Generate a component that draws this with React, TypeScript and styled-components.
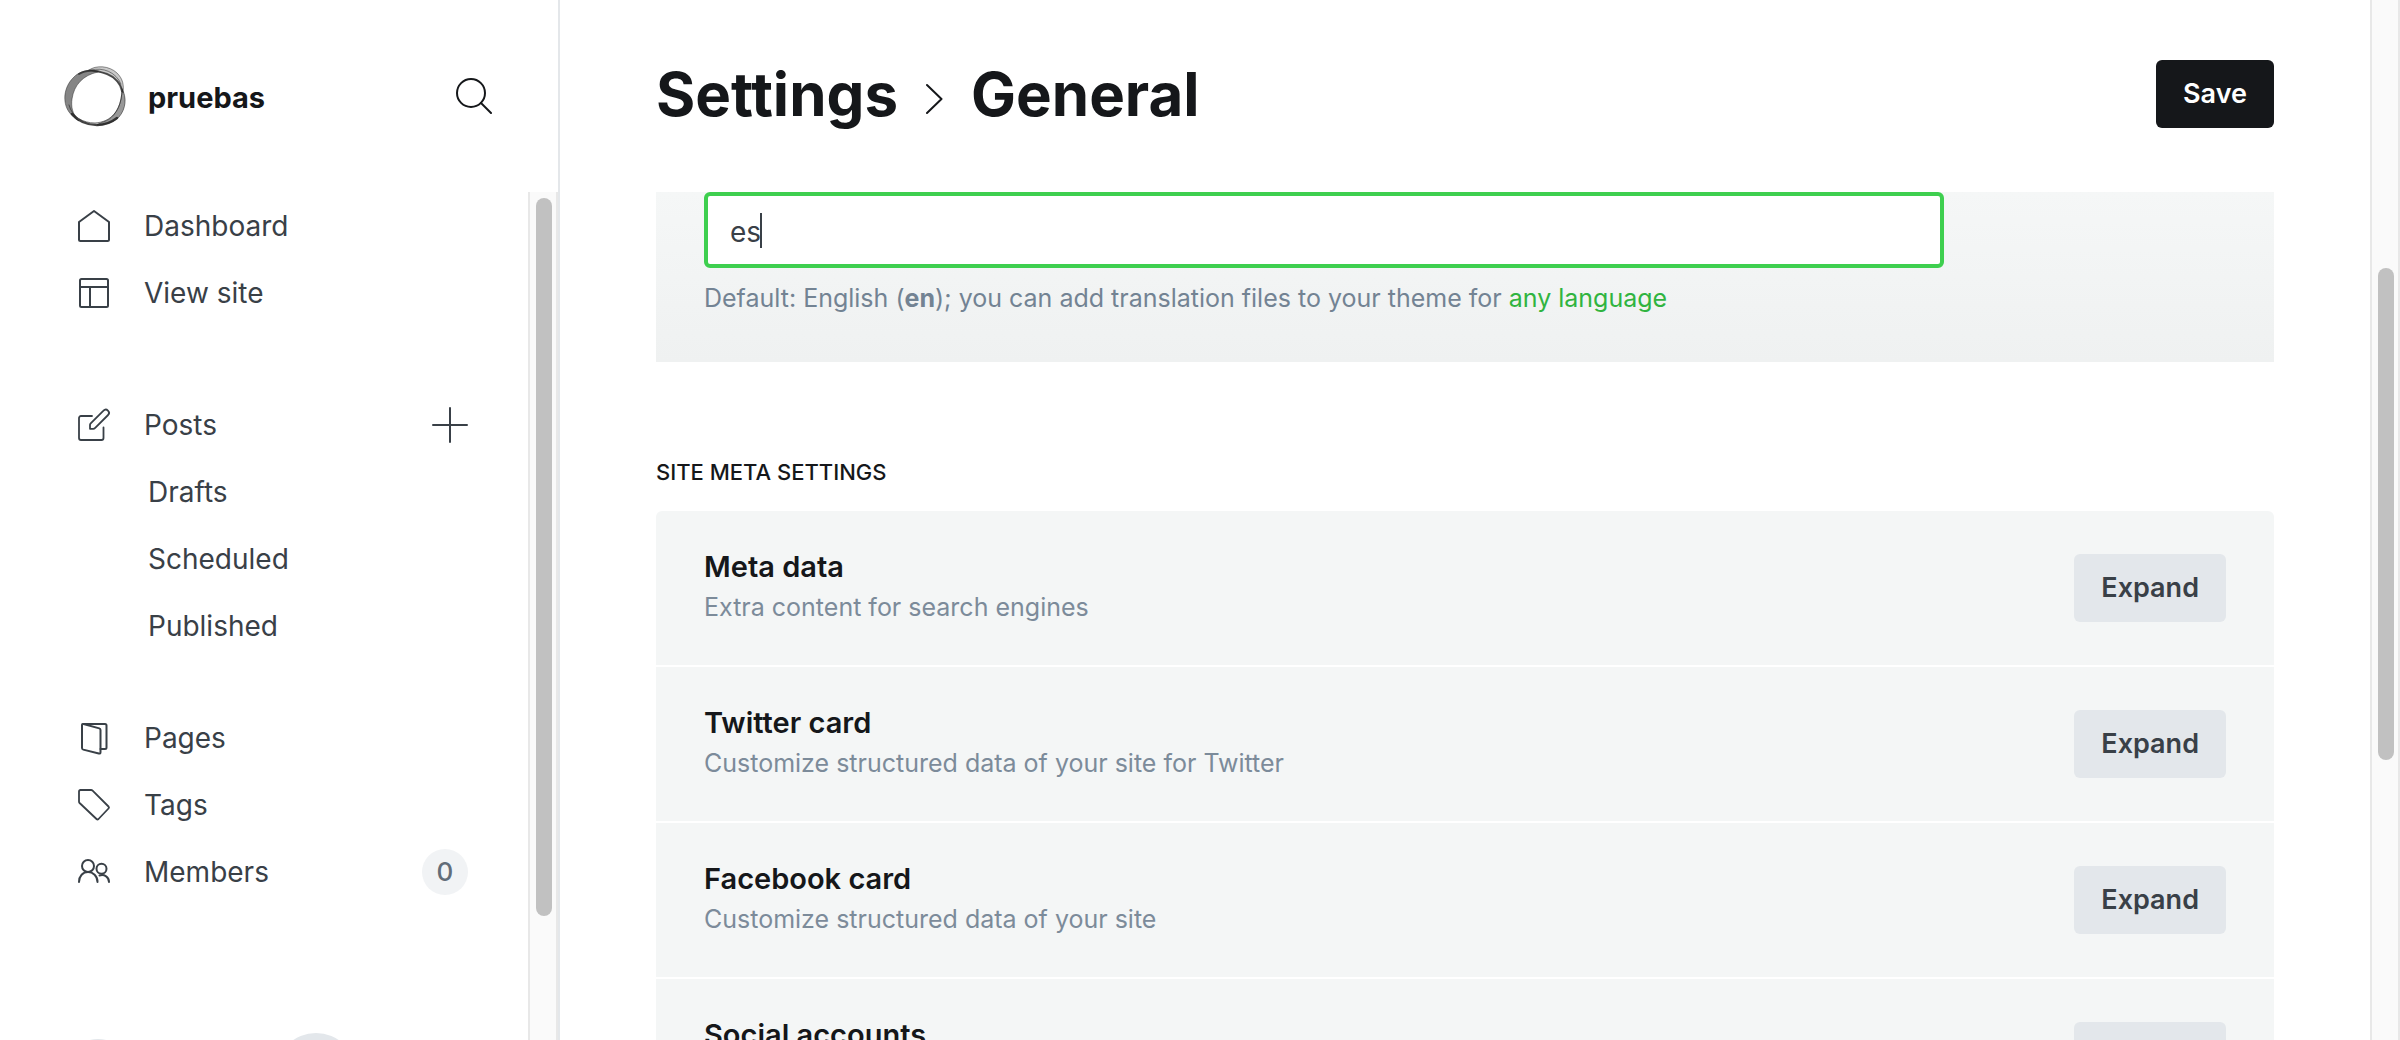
import React from "react";
import styled, { createGlobalStyle } from "styled-components";

const ink = "#15171a";
const slate = "#394047";

const GlobalStyle = createGlobalStyle`
  *, *::before, *::after { box-sizing: border-box; }
  body {
    margin: 0;
    background: #fff;
    color: ${slate};
    font-family: Inter, "Open Sans", sans-serif;
    font-size: 28px;
    line-height: 34px;
  }
  a { color: inherit; text-decoration: none; }
  button, input { font: inherit; }
`;

const Shell = styled.div`
  display: flex;
  height: 100vh;
  overflow: hidden;
`;

const Sidebar = styled.aside`
  flex: 0 0 560px;
  display: flex;
  flex-direction: column;
  border-right: 2px solid #e4e7ea;
`;

const SiteBar = styled.div`
  flex: 0 0 192px;
  display: flex;
  align-items: center;
  gap: 22px;
  padding: 0 66px 0 64px;
`;

const SiteName = styled.strong`
  flex: 1;
  padding-top: 4px;
  color: ${ink};
  font-size: 29px;
  font-weight: 700;
`;

const IconButton = styled.button`
  display: flex;
  padding: 0;
  border: 0;
  background: none;
  color: ${(p) => p.color};
  cursor: pointer;
`;

const SidebarBody = styled.div`
  flex: 1;
  min-height: 0;
  display: flex;
`;

const Nav = styled.nav`
  flex: 1;
  display: flex;
  flex-direction: column;
  overflow: hidden;
`;

const NavList = styled.ul<{ $after: number }>`
  margin: 0 0 ${(p) => p.$after}px;
  padding: 0;
  list-style: none;
`;

const NavItem = styled.li`
  display: flex;
  align-items: center;
  height: 67px;
  padding: 0 60px 0 76px;
`;

const NavLink = styled.a`
  flex: 1;
  display: flex;
  align-items: center;
  gap: 32px;
`;

const SubLink = styled.a`
  flex: 1;
  padding-left: 72px;
`;

const Count = styled.span`
  display: grid;
  place-items: center;
  width: 46px;
  height: 46px;
  border-radius: 50%;
  background: #f1f3f5;
  color: #626d79;
  font-size: 26px;
  font-weight: 500;
`;

const SidebarFooter = styled.div`
  display: flex;
  align-items: center;
  gap: 144px;
  padding: 64px;
`;

const Disc = styled.button<{ $size: number }>`
  width: ${(p) => p.$size}px;
  height: ${(p) => p.$size}px;
  border: 0;
  border-radius: 50%;
  background: #e3e7eb;
`;

const Track = styled.div`
  flex: 0 0 30px;
  padding: 0 4px 0 6px;
  border: solid #e8e8e8;
  border-width: 0 2px;
  background: #fafafa;
`;

const Thumb = styled.div<{ $top: number; $length: number }>`
  width: 16px;
  height: ${(p) => p.$length}px;
  margin-top: ${(p) => p.$top}px;
  border-radius: 8px;
  background: #c1c1c1;
`;

const TrackInner = styled.div`
  display: flow-root;
`;

const Main = styled.main`
  flex: 1;
  min-width: 0;
  padding: 0 96px;
`;

const Header = styled.header`
  display: flex;
  align-items: center;
  justify-content: space-between;
  height: 192px;
  padding-bottom: 4px;
`;

const Title = styled.h1`
  display: flex;
  align-items: center;
  gap: 28px;
  margin: 0;
  color: ${ink};
  font-size: 60px;
  line-height: 72px;
  font-weight: 700;
`;

const Button = styled.button<{ $primary?: boolean }>`
  height: 68px;
  padding: 0 27px;
  border: 0;
  border-radius: 6px;
  background: ${(p) => (p.$primary ? ink : "#e3e7eb")};
  color: ${(p) => (p.$primary ? "#fff" : slate)};
  font-size: 27px;
  font-weight: 600;
  cursor: pointer;
`;

const LanguagePanel = styled.section`
  height: 170px;
  padding: 0 48px;
  background: linear-gradient(#f5f7f7, #eff1f1);
`;

const Field = styled.div`
  position: relative;
  max-width: 1240px;
`;

const TextInput = styled.input`
  display: block;
  width: 100%;
  height: 76px;
  padding: 4px 22px 0;
  border: 4px solid #3ecf4f;
  border-radius: 6px;
  outline: 0;
  background: #fff;
  color: ${slate};
  caret-color: transparent;
`;

const Caret = styled.span`
  position: absolute;
  top: 21px;
  left: 56px;
  width: 2px;
  height: 35px;
  background: ${slate};
`;

const Help = styled.p`
  margin: 14px 0 0;
  color: #738393;
  font-size: 25px;
  line-height: 32px;

  a { color: #30b440; }
  b { font-weight: 700; }
`;

const SectionTitle = styled.h2`
  margin: 93px 0 22px;
  color: ${ink};
  font-size: 22px;
  line-height: 34px;
  font-weight: 500;
  text-transform: uppercase;
`;

const Settings = styled.ul`
  display: flex;
  flex-direction: column;
  gap: 2px;
  margin: 0;
  padding: 0;
  border-radius: 6px;
  overflow: hidden;
  list-style: none;
`;

const SettingRow = styled.li`
  display: flex;
  align-items: center;
  justify-content: space-between;
  height: 154px;
  padding: 0 48px;
  background: #f4f6f6;
`;

const SettingName = styled.h3`
  margin: 0;
  color: ${ink};
  font-size: 29px;
  line-height: 40px;
  font-weight: 600;
`;

const SettingNote = styled.p`
  margin: 0 0 2px;
  color: #7c8b9a;
  font-size: 25px;
  line-height: 40px;
`;

const Line: React.FC<{ weight?: number; children: React.ReactNode }> = ({ weight = 2, children }) => (
  <svg
    width="36"
    height="36"
    viewBox="0 0 36 36"
    fill="none"
    stroke="currentColor"
    strokeWidth={weight}
    strokeLinecap="round"
    strokeLinejoin="round"
    aria-hidden="true"
  >
    {children}
  </svg>
);

const HomeIcon = () => (
  <Line>
    <path d="M3 14 18 3l15 11v17.500a1.500 1.500 0 0 1-1.500 1.500h-27a1.500 1.500 0 0 1-1.500-1.500Z" />
  </Line>
);
const SiteIcon = () => (
  <Line>
    <rect x="4" y="4" width="28" height="28" rx="1.500" />
    <path d="M4 12h28M14 12v20" />
  </Line>
);
const PostIcon = () => (
  <Line weight={1.8}>
    <path d="M16 9H5a2 2 0 0 0-2 2v20a2 2 0 0 0 2 2h20.500a2 2 0 0 0 2-2V20.500" />
    <path d="M14 21.800V18q0-1 .7-1.700L27.500 3.700a3 3 0 0 1 4.600 4.300L19.200 20.800q-1 1-2 1Z" />
  </Line>
);
const PagesIcon = () => (
  <Line>
    <path d="M24.500 29h4.500a1.500 1.500 0 0 0 1.500-1.500v-22A1.500 1.500 0 0 0 29 4H7.500" />
    <path d="m7.500 4 15.800 4.400q1.200.400 1.200 1.600v22.300q0 1.700-1.700 1.200L7.300 29.600Q6 29.200 6 28V5.200Q6 3.700 7.500 4Z" />
  </Line>
);
const TagIcon = () => (
  <Line weight={1.8}>
    <path d="M4.500 3H15q1 0 1.600.600L32.500 19.500q1 1 0 2L22.500 32q-1 1-2 0L3.600 16Q3 15.400 3 14.500v-10Q3 3 4.500 3Z" />
  </Line>
);
const MembersIcon = () => (
  <Line>
    <circle cx="12" cy="12" r="6" />
    <circle cx="25.500" cy="14.800" r="5" />
    <path d="M3 28c0-6 4-10 9-10s9.500 4 9.500 10M23.500 21.500c5-1.500 9.500 1.500 9.500 6.500" />
  </Line>
);
const SearchIcon = () => (
  <Line>
    <circle cx="15" cy="15" r="14" />
    <path d="m25 25 10 10" />
  </Line>
);
const PlusIcon = () => (
  <Line>
    <path d="M18 1v34M1 18h34" />
  </Line>
);
const ChevronIcon = () => (
  <svg width="17" height="42" viewBox="0 0 17 42" fill="none" stroke="currentColor" strokeWidth="2" strokeLinecap="round" strokeLinejoin="round" aria-hidden="true">
    <path d="m1 12 14.500 14L1 40" />
  </svg>
);

const Logo = () => (
  <svg width="62" height="62" viewBox="0 0 62 62" fill="none" aria-hidden="true">
    <g stroke="#222" strokeLinecap="round">
      <path
        fill="#444"
        fillOpacity=".65"
        strokeWidth=".8"
        strokeOpacity=".6"
        d="M34 6C25 4 15 6 9 13 0 22-2 37 5 47c3 4 6 7 10 9C8 49 7 41 8 34 10 20 19 10 34 7Z"
      />
      <path
        fill="#666"
        fillOpacity=".35"
        strokeWidth=".9"
        strokeOpacity=".55"
        d="M25 5C32 0 45 .5 53 8c6 6 7 12 6 20-2-9-9-17-19-20-5-1-9-2-15-3Z"
      />
      <path
        fill="#444"
        fillOpacity=".55"
        strokeWidth=".9"
        strokeOpacity=".6"
        d="M58 24c5 8 4 20-3 28-5 5-13 8-22 8 2-2 7-3 11-5 9-6 14-17 14-31Z"
      />
      <path strokeWidth="2" strokeOpacity=".7" d="M15 9C24 3 35 6 43 9s14 10 15 17" />
      <path strokeWidth="1" strokeOpacity=".5" d="M27 5c12-3 25 2 30 14" />
      <path strokeWidth="2.400" strokeOpacity=".85" d="M8 49c7 8 16 11 25 11 8 0 15-3 20-7" />
      <path strokeWidth="1" strokeOpacity=".6" d="M5 40c3 12 14 18 26 18 16-1 26-12 27-32" />
    </g>
  </svg>
);

const Scrollbar = ({ top, length }: { top: number; length: number }) => (
  <Track aria-hidden="true">
    <TrackInner>
      <Thumb $top={top} $length={length} />
    </TrackInner>
  </Track>
);

const settings = [
  { name: "Meta data", note: "Extra content for search engines" },
  { name: "Twitter card", note: "Customize structured data of your site for Twitter" },
  { name: "Facebook card", note: "Customize structured data of your site" },
  { name: "Social accounts", note: "Link your social accounts" },
];

export default function App() {
  return (
    <>
      <GlobalStyle />
      <Shell>
        <Sidebar>
          <SiteBar>
            <Logo />
            <SiteName>pruebas</SiteName>
            <IconButton color={ink} aria-label="Search">
              <SearchIcon />
            </IconButton>
          </SiteBar>
          <SidebarBody>
            <Nav>
              <NavList $after={65}>
                <NavItem>
                  <NavLink href="#dashboard"><HomeIcon />Dashboard</NavLink>
                </NavItem>
                <NavItem>
                  <NavLink href="#site"><SiteIcon />View site</NavLink>
                </NavItem>
              </NavList>
              <NavList $after={45}>
                <NavItem>
                  <NavLink href="#posts"><PostIcon />Posts</NavLink>
                  <IconButton color={slate} aria-label="New post">
                    <PlusIcon />
                  </IconButton>
                </NavItem>
                <NavItem><SubLink href="#drafts">Drafts</SubLink></NavItem>
                <NavItem><SubLink href="#scheduled">Scheduled</SubLink></NavItem>
                <NavItem><SubLink href="#published">Published</SubLink></NavItem>
              </NavList>
              <NavList $after={64}>
                <NavItem>
                  <NavLink href="#pages"><PagesIcon />Pages</NavLink>
                </NavItem>
                <NavItem>
                  <NavLink href="#tags"><TagIcon />Tags</NavLink>
                </NavItem>
                <NavItem>
                  <NavLink href="#members"><MembersIcon />Members</NavLink>
                  <Count>0</Count>
                </NavItem>
              </NavList>
              <SidebarFooter>
                <Disc $size={68} aria-label="Account" />
                <Disc $size={80} aria-label="Settings" />
              </SidebarFooter>
            </Nav>
            <Scrollbar top={6} length={718} />
          </SidebarBody>
        </Sidebar>
        <Main>
          <Header>
            <Title>
              <a href="#settings">Settings</a>
              <ChevronIcon />
              General
            </Title>
            <Button $primary>Save</Button>
          </Header>
          <LanguagePanel>
            <Field>
              <TextInput aria-label="Publication language" defaultValue="es" />
              <Caret />
            </Field>
            <Help>
              Default: English (<b>en</b>); you can add translation files to your theme for{" "}
              <a href="#translation">any language</a>
            </Help>
          </LanguagePanel>
          <SectionTitle>Site meta settings</SectionTitle>
          <Settings>
            {settings.map((s) => (
              <SettingRow key={s.name}>
                <div>
                  <SettingName>{s.name}</SettingName>
                  <SettingNote>{s.note}</SettingNote>
                </div>
                <Button>Expand</Button>
              </SettingRow>
            ))}
          </Settings>
        </Main>
        <Scrollbar top={268} length={492} />
      </Shell>
    </>
  );
}
